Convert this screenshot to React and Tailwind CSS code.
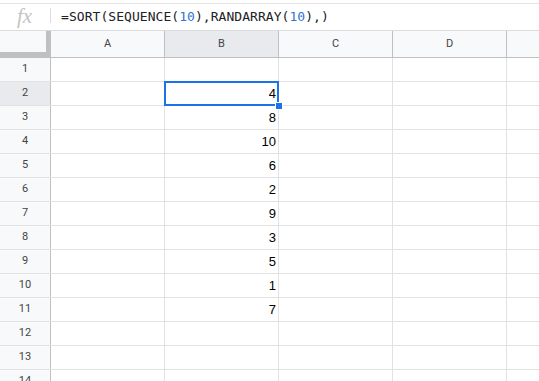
import React from 'react';

const cols = ['A', 'B', 'C', 'D'];
const values = { 2: 4, 3: 8, 4: 10, 5: 6, 6: 2, 7: 9, 8: 3, 9: 5, 10: 1, 11: 7 };
const rows = Array.from({ length: 14 }, (_, i) => i + 1);

function FormulaBar() {
    return (
        <div className="h-[27px] border-b border-[#dadce0] flex items-center bg-white">
            <div className="w-[51px] flex items-center justify-center h-full relative">
                <span className="text-[21px] italic text-[#c4c4c4] leading-none font-['Liberation_Serif',serif] -mt-[2px] -ml-[2px]">fx</span>
                <span className="absolute right-0 top-[4px] h-[15px] w-px bg-[#dadce0]" />
            </div>
            <div className="pl-[10px] text-[13px] text-[#202124] font-['DejaVu_Sans_Mono',monospace] tracking-[0.05px] whitespace-nowrap">
                =SORT(SEQUENCE(<span className="text-[#2f74d6]">10</span>),RANDARRAY(<span className="text-[#2f74d6]">10</span>),)
            </div>
        </div>
    );
}

function HeaderRow() {
    return (
        <div className="flex h-[27px] border-b border-[#c0c0c0] bg-[#f8f9fa] font-['Roboto',sans-serif] text-[11px] text-[#444]">
            <div className="w-[51px] shrink-0 flex flex-col border-r border-[#c0c0c0]">
                <div className="flex flex-1">
                    <div className="w-[46px] bg-[#f8f9fa]" />
                    <div className="flex-1 bg-[#c0c0c0]" />
                </div>
                <div className="h-[5px] bg-[#c0c0c0]" />
            </div>
            {cols.map((c) => (
                <div
                    key={c}
                    className={`w-[114px] shrink-0 border-r border-[#c0c0c0] flex items-center justify-center ${c === 'B' ? 'bg-[#e8eaed]' : ''}`}
                >
                    {c}
                </div>
            ))}
            <div className="flex-1" />
        </div>
    );
}

function Row({ n }) {
    const active = n === 2;
    return (
        <div className="flex h-[24px] border-b border-[#e2e2e2]">
            <div
                className={`w-[51px] shrink-0 border-r border-[#c0c0c0] flex items-center justify-center font-['Roboto',sans-serif] text-[11px] text-[#444] ${active ? 'bg-[#e8eaed]' : 'bg-[#f8f9fa]'}`}
            >
                {n}
            </div>
            {cols.map((c) => (
                <div
                    key={c}
                    className="w-[114px] shrink-0 border-r border-[#e2e2e2] relative flex items-center justify-end pr-[2px] font-['Liberation_Sans',Arial,sans-serif] text-[13px] text-black"
                >
                    {c === 'B' && values[n]}
                    {c === 'B' && active && (
                        <>
                            <span className="absolute -left-px -top-px -right-px -bottom-px border-2 border-[#1a73e8] pointer-events-none" />
                            <span className="absolute right-[-5px] bottom-[-5px] w-[8px] h-[8px] bg-[#1a73e8] border border-white z-10" />
                        </>
                    )}
                </div>
            ))}
            <div className="flex-1" />
        </div>
    );
}

export default function App() {
    return (
        <div className="w-[539px] h-[381px] overflow-hidden bg-white">
            <div className="h-[3px]" />
            <div className="border-t border-[#e3e3e3]">
                <FormulaBar />
            </div>
            <HeaderRow />
            {rows.map((n) => (
                <Row key={n} n={n} />
            ))}
        </div>
    );
}
